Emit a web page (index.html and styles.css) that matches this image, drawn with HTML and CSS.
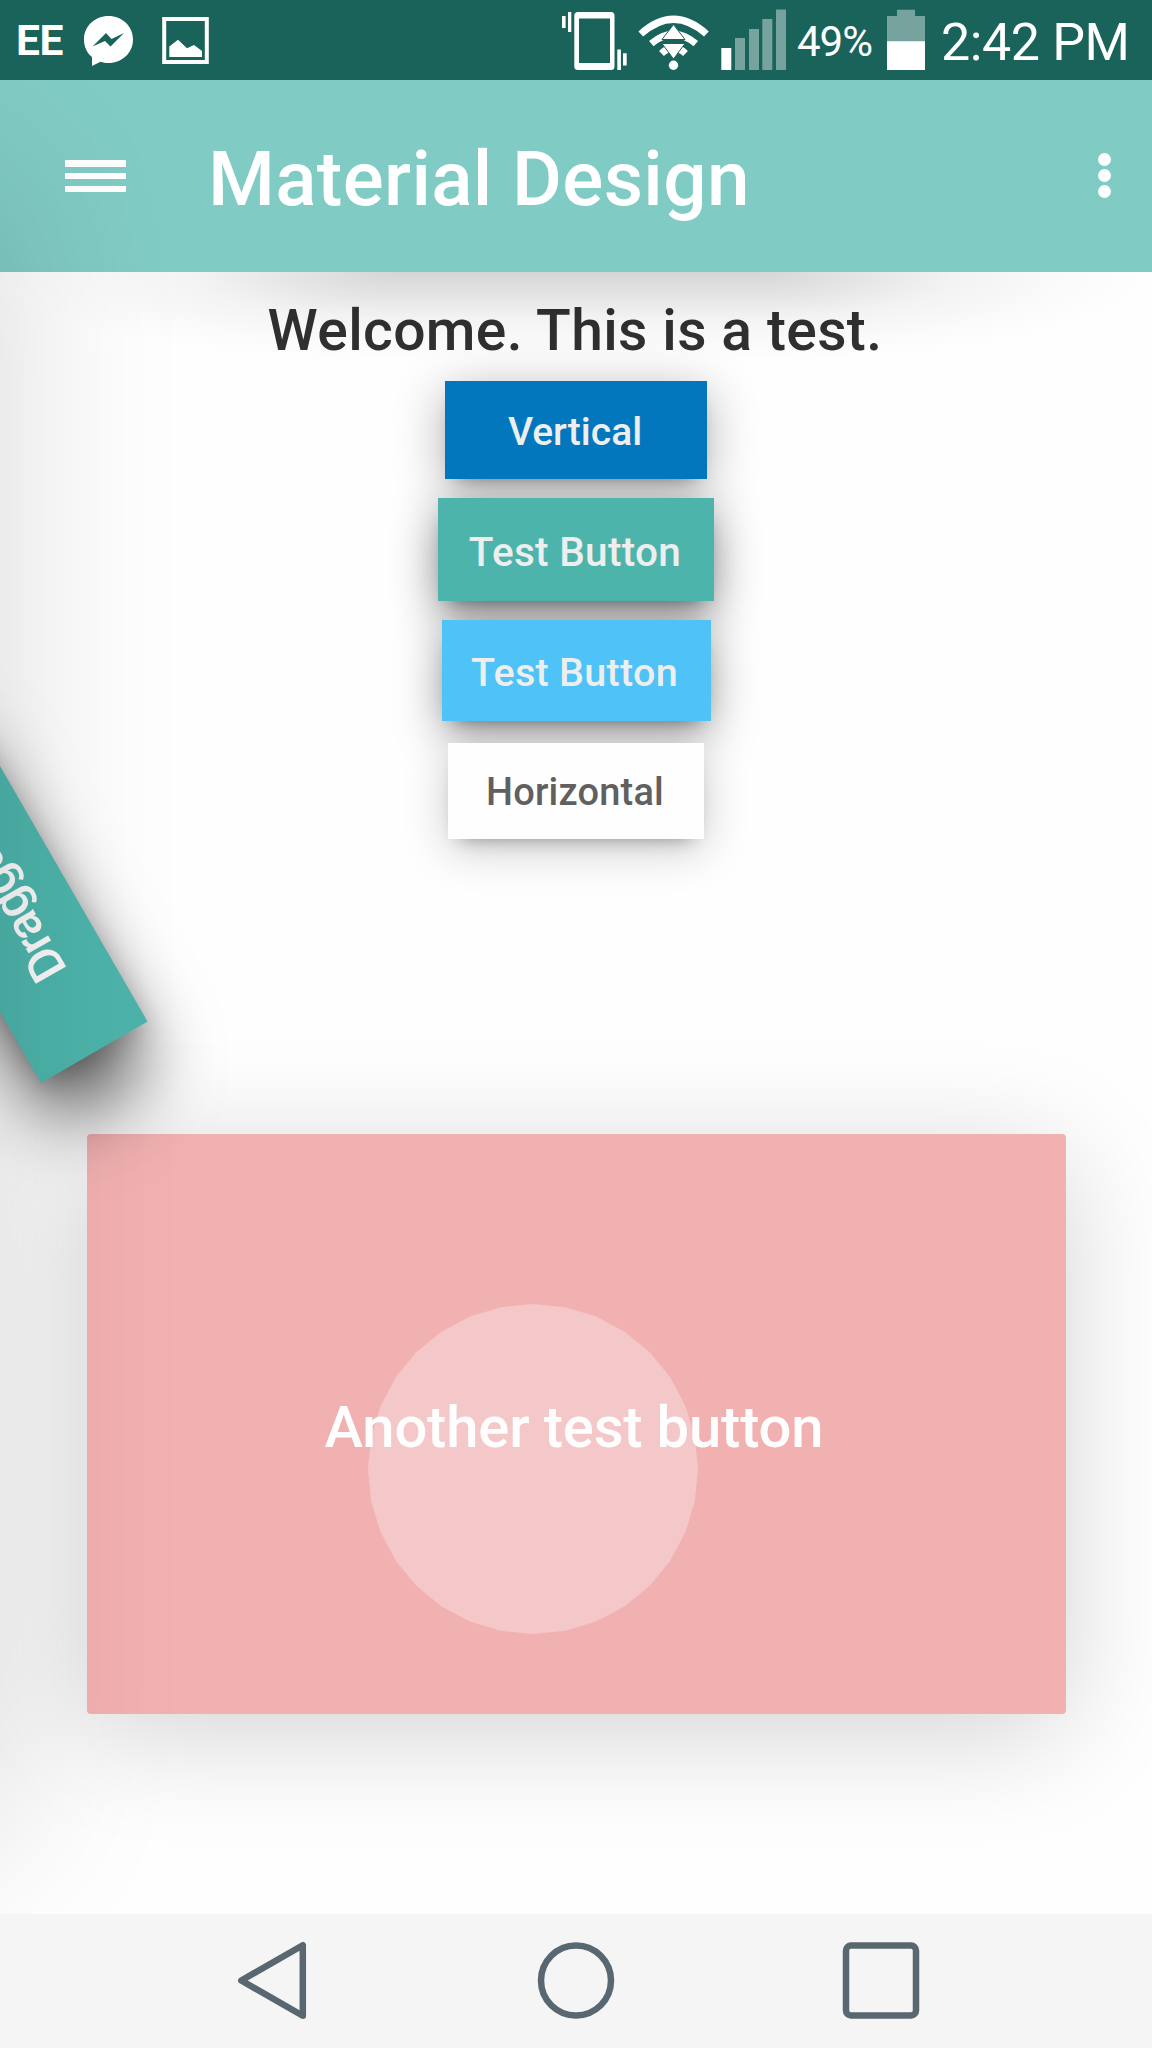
FILE: index.html
```html
<!DOCTYPE html>
<html lang="en">
<head>
    <meta charset="UTF-8">
    <meta name="viewport" content="width=device-width, initial-scale=1.0">
    <title>Material Design</title>
    <link rel="stylesheet" href="styles.css">
</head>
<body>
    <div class="status-bar">
        <span class="carrier">EE</span>
        <svg class="messenger" width="50" height="80" viewBox="84 0 50 80">
            <path fill="#fff" d="M108.500 16C122 16 133 26 133 39.500S122 63 108.500 63c-3 0-5.500-.4-8-1.300L92 66V57C87 53 84 47 84 39.500 84 26 95 16 108.500 16z"/>
            <path fill="#19635b" d="M92.500 46.500L106 33l5.500 6L124 33 110.500 46.500 105 41z"/>
        </svg>
        <svg class="picture" width="47" height="80" viewBox="162 0 47 80">
            <rect x="164.200" y="19" width="42.600" height="43" fill="none" stroke="#fff" stroke-width="4"/>
            <path fill="#fff" d="M169.300 57V46.500L178 39.700l9 8.600 7-3.300 8 6V57z"/>
        </svg>
        <div class="status-right">
            <svg width="66" height="80" viewBox="562 0 66 80">
                <path fill="#fff" d="M562 16h3.600v12H562zM568 12h3.300v20H568zM617.300 49.500h3.600V70h-3.600zM623 53.300h3.700v12.300H623z"/>
                <path fill="#fff" fill-rule="evenodd" d="M578 12h33q3.500 0 3.500 3.500V66.500q0 3.500-3.500 3.500H578q-3.700 0-3.700-3.500V15.500q0-3.500 3.700-3.500zM579 18.500V63h31V18.500z"/>
            </svg>
            <svg class="wifi" width="72" height="80" viewBox="638 0 72 80">
                <g fill="none" stroke="#fff" stroke-width="7">
                    <path d="M640.800 34Q673.500 4.500 706.400 34"/>
                    <path d="M651.300 43.700Q673.500 24.500 695.800 43.700"/>
                    <path d="M661.500 53.500Q673.500 42 685.500 53.500"/>
                </g>
                <path fill="#fff" stroke="#19635b" stroke-width="1" d="M673.500 24.500L685 39.500H662zM673.500 59L662 43.500H685z"/>
                <circle cx="673.500" cy="65.200" r="4.700" fill="#fff"/>
            </svg>
            <svg class="signal" width="65" height="80" viewBox="721 0 65 80">
                <path fill="#fff" d="M721.300 48h10v22h-10z"/>
                <path fill="#76a39e" d="M735 38h10v32h-10zM749 29h10v41h-10zM762.300 19h10v51h-10zM776 9.500h10V70h-10z"/>
            </svg>
            <span class="percent">49%</span>
            <svg width="38" height="80" viewBox="887 0 38 80">
                <path fill="#76a39e" d="M887 16h10v-6.300h18V16h10v26h-38z"/>
                <path fill="#fff" d="M887 41.300h38V70h-38z"/>
            </svg>
            <span class="clock">2:42 PM</span>
        </div>
    </div>

    <div class="app-bar">
        <div class="menu">
            <span></span>
            <span></span>
            <span></span>
        </div>
        <h1>Material Design</h1>
        <div class="more">
            <span></span>
            <span></span>
            <span></span>
        </div>
    </div>

    <div class="content">
        <p class="welcome">Welcome. This is a test.</p>
        <button class="btn vertical">Vertical</button>
        <button class="btn teal">Test Button</button>
        <button class="btn blue">Test Button</button>
        <button class="btn horizontal">Horizontal</button>
        <button class="card">
            <svg class="ripple" width="330" height="330" viewBox="-165 -165 330 330">
                <polygon fill="#f4c8c8" points="165,0 161.800,32.200 152.400,63.100 137.200,91.700 116.700,116.700 91.700,137.200 63.100,152.400 32.200,161.800 0,165 -32.200,161.800 -63.100,152.400 -91.700,137.200 -116.700,116.700 -137.200,91.700 -152.400,63.100 -161.800,32.200 -165,0 -161.800,-32.200 -152.400,-63.100 -137.200,-91.700 -116.700,-116.700 -91.700,-137.200 -63.100,-152.400 -32.200,-161.800 0,-165 32.200,-161.800 63.100,-152.400 91.700,-137.200 116.700,-116.700 137.200,-91.700 152.400,-63.100 161.800,-32.200"/>
            </svg>
            <span class="card-label">Another test button</span>
        </button>
    </div>

    <div class="draggable">Draggable</div>
    <div class="drawer"></div>

    <div class="nav-bar">
        <svg width="76" height="80" viewBox="233 1940 76 80">
            <path d="M301.800 1945.200V2015.800L240.300 1980.500z"/>
        </svg>
        <svg width="80" height="80" viewBox="536 1940 80 80">
            <circle cx="576" cy="1980.500" r="35"/>
        </svg>
        <svg width="80" height="80" viewBox="841 1940 80 80">
            <rect x="846" y="1945.500" width="70" height="70" rx="5"/>
        </svg>
    </div>
</body>
</html>
```

FILE: styles.css
```css
body {
    font-family: Roboto, sans-serif;
    font-weight: 500;
    margin: 0;
    width: 1152px;
    height: 2048px;
    position: relative;
    overflow: hidden;
    background: #fefefe;
    display: flex;
    flex-direction: column;
}

svg {
    display: block;
    flex: none;
}

.status-bar {
    position: relative;
    z-index: 5;
    height: 80px;
    box-sizing: border-box;
    padding-left: 16px;
    background: #19635b;
    color: #fff;
    display: flex;
    flex: none;
    line-height: 80px;
}

.carrier {
    width: 68px;
    font-size: 42.500px;
    font-weight: 700;
    letter-spacing: -0.5px;
    padding-top: 1px;
}

.picture {
    margin-left: 28px;
}

.status-right {
    display: flex;
    margin-left: 353px;
    font-weight: 400;
}

.wifi {
    margin-left: 10px;
}

.signal {
    margin-left: 11px;
}

.percent {
    width: 90px;
    margin-left: 11px;
    font-size: 42px;
    letter-spacing: -1px;
    padding-top: 2px;
}

.clock {
    margin-left: 16px;
    font-size: 52px;
    letter-spacing: -0.400px;
    padding-top: 3px;
    white-space: nowrap;
}

.app-bar {
    position: relative;
    z-index: 1;
    height: 192px;
    flex: none;
    background: #80cbc4;
    color: #fff;
    display: flex;
}

/* shadow that fades out towards both ends of the bar */
.app-bar::after {
    content: "";
    position: absolute;
    top: 192px;
    left: 0;
    width: 1152px;
    height: 90px;
    background:
        radial-gradient(ellipse 100% 100% at 100% 0, rgba(0,0,0,.16), rgba(0,0,0,.1) 26%, rgba(0,0,0,.045) 52%, rgba(0,0,0,.015) 78%, transparent) left / 400px 90px no-repeat,
        linear-gradient(rgba(0,0,0,.16), rgba(0,0,0,.1) 26%, rgba(0,0,0,.045) 52%, rgba(0,0,0,.015) 78%, transparent) center / 352px 90px no-repeat,
        radial-gradient(ellipse 100% 100% at 0 0, rgba(0,0,0,.16), rgba(0,0,0,.1) 26%, rgba(0,0,0,.045) 52%, rgba(0,0,0,.015) 78%, transparent) right / 400px 90px no-repeat;
}

.menu {
    width: 61px;
    height: 32px;
    margin: 80px 0 0 65px;
    display: flex;
    flex-direction: column;
    justify-content: space-between;
}

.menu span {
    height: 6.5px;
    background: #fff;
}

.app-bar h1 {
    margin: 0 0 0 82px;
    padding-top: 3px;
    font-size: 76.500px;
    letter-spacing: 0.350px;
    font-weight: 500;
    line-height: 192px;
    white-space: nowrap;
}

.more {
    margin: 73px 41.500px 0 auto;
    display: flex;
    flex-direction: column;
    gap: 3px;
}

.more span {
    width: 13px;
    height: 13px;
    border-radius: 50%;
    background: #fff;
}

.content {
    position: relative;
    z-index: 0;
    flex: 1;
    display: flex;
    flex-direction: column;
    align-items: center;
}

.welcome {
    margin: 19px 0 0;
    height: 90px;
    padding-right: 2px;
    font-size: 57px;
    letter-spacing: 0.350px;
    line-height: 80px;
    color: #303030;
    white-space: nowrap;
}

.btn,
.card {
    position: relative;
    font-family: inherit;
    font-weight: 500;
    border: none;
    flex: none;
    white-space: nowrap;
}

.btn {
    color: #eee;
    padding: 4px 2px 0 0;
}

/* shadows stay below every button in the column */
.btn::before {
    content: "";
    position: absolute;
    inset: 0;
    z-index: -1;
    box-shadow: 0 10px 50px rgba(0,0,0,.3), 0 10px 18px -12px rgba(0,0,0,.45);
}

.vertical {
    width: 262px;
    height: 98px;
    font-size: 39px;
    background: #0277bd;
}

.teal {
    width: 276px;
    height: 103px;
    margin-top: 19px;
    padding-top: 5px;
    font-size: 40.500px;
    letter-spacing: 0.300px;
    background: #4db4ab;
}

.teal::before {
    box-shadow: 0 14px 46px rgba(0,0,0,.46), 0 10px 18px -12px rgba(0,0,0,.5);
}

.blue {
    width: 269px;
    height: 101px;
    margin-top: 19px;
    padding: 3px 3px 0 0;
    font-size: 39.500px;
    letter-spacing: 0.300px;
    background: #4fc2f7;
}

.blue::before {
    box-shadow: 0 12px 46px rgba(0,0,0,.38), 0 10px 18px -12px rgba(0,0,0,.5);
}

.horizontal {
    width: 256px;
    height: 96px;
    margin-top: 22px;
    padding-top: 2px;
    font-size: 38px;
    letter-spacing: 0.200px;
    color: #606060;
    background: #fefefe;
}

.horizontal::before {
    box-shadow: 0 10px 46px rgba(0,0,0,.2), 0 10px 18px -12px rgba(0,0,0,.4);
}

.card {
    width: 979px;
    height: 580px;
    margin-top: 295px;
    padding: 6px 4px 0 0;
    border-radius: 4px;
    background: #f2b1b1;
    color: #fefefe;
    box-shadow: 0 20px 110px -4px rgba(0,0,0,.18);
}

.ripple {
    position: absolute;
    left: 281px;
    top: 170px;
}

.card-label {
    position: relative;
    font-size: 58px;
    letter-spacing: -0.200px;
}

.draggable {
    position: absolute;
    left: 40.500px;
    top: 1083.300px;
    z-index: 3;
    width: 390px;
    height: 123px;
    box-sizing: border-box;
    padding-left: 85px;
    line-height: 127px;
    font-size: 49px;
    letter-spacing: -1.500px;
    color: #f8f8f8;
    background: #4db4ab;
    transform: rotate(240deg);
    transform-origin: 0 0;
    box-shadow: -50px -14px 74px -6px rgba(0,0,0,.65), -10px -2px 26px -4px rgba(0,0,0,.2);
}

/* closed drawer: only its shadow reaches the page */
.drawer {
    position: absolute;
    left: -600px;
    top: 180px;
    z-index: 4;
    width: 600px;
    height: 1660px;
    pointer-events: none;
    box-shadow: 0 0 170px rgba(0,0,0,.15);
}

.nav-bar {
    position: relative;
    z-index: 5;
    height: 134px;
    box-sizing: border-box;
    flex: none;
    padding: 26px 231px 0 234px;
    background: #f5f5f5;
    display: flex;
    justify-content: space-between;
}

.nav-bar svg {
    fill: none;
    stroke: #596870;
    stroke-width: 6.500;
    stroke-linejoin: round;
}
```
